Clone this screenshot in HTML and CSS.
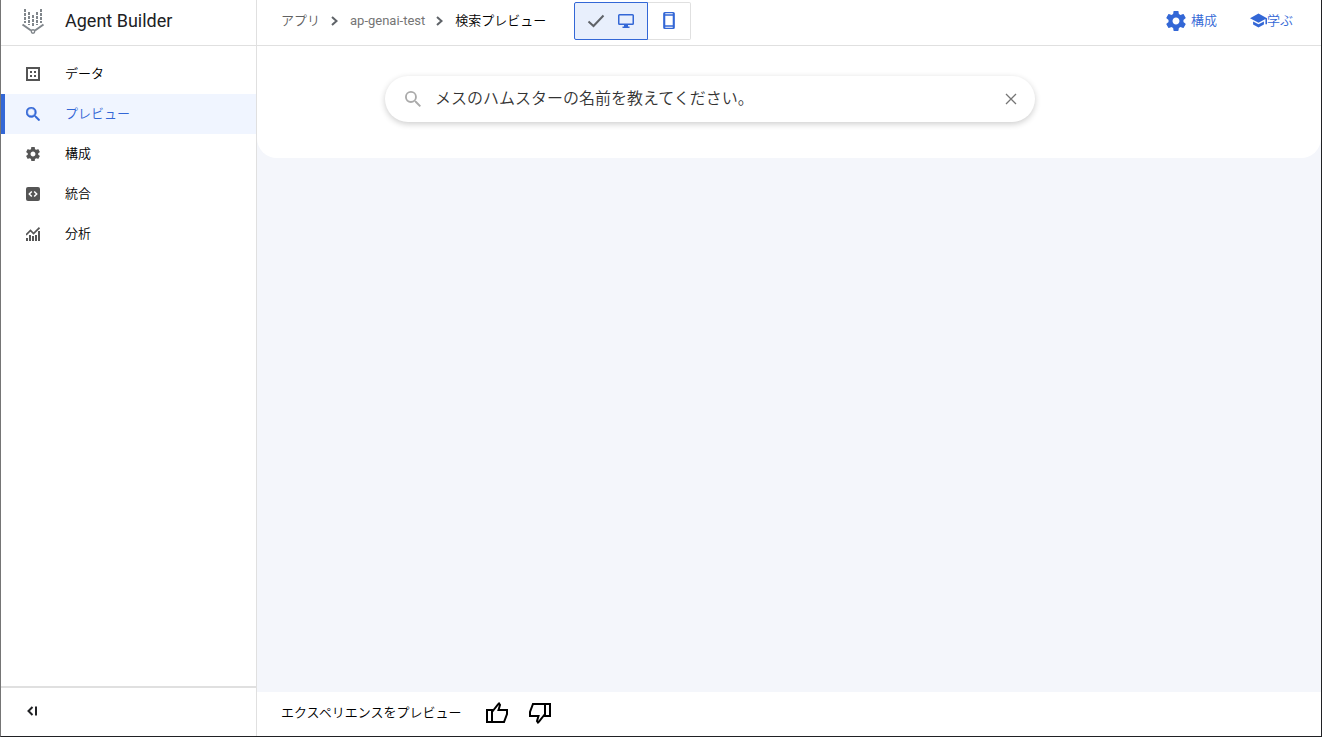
FILE: index.html
```html
<!DOCTYPE html>
<html lang="ja">
<head>
    <meta charset="UTF-8">
    <meta name="viewport" content="width=device-width, initial-scale=1.0">
    <title>Agent Builder</title>
    <link rel="stylesheet" href="styles.css">
</head>
<body>
    <div class="app">
        <aside class="sidebar">
            <div class="brand">
                <svg class="logo" viewBox="0 0 24 28">
                    <path d="M4 2v14M20 2v14" stroke-dasharray="3 1"/>
                    <path d="M8 5v13M16 5v13M12 8v12" stroke-dasharray="3 1"/>
                    <path d="M1.500 17.500L10 23.500M22.500 17.500L14 23.500"/>
                    <circle cx="12" cy="24.500" r="1.700" stroke-width="1.400"/>
                </svg>
                <h1>Agent Builder</h1>
            </div>
            <nav class="menu">
                <a href="#">
                    <svg viewBox="0 0 14 14"><path fill-rule="evenodd" d="M0 0h14v14H0zM2 2v10h10V2zM4 4h2v2H4zM8 4h2v2H8zM4 8h2v2H4zM8 8h2v2H8z"/></svg>
                    データ
                </a>
                <a href="#" class="active" aria-current="page">
                    <svg viewBox="3 3 17.500 17.500"><path d="M15.500 14h-.79l-.28-.27A6.470 6.470 0 0 0 16 9.500 6.500 6.500 0 1 0 9.500 16c1.610 0 3.090-.59 4.230-1.570l.27.28v.79l5 4.990L20.490 19l-4.990-5zm-6 0a4.500 4.500 0 1 1 0-9 4.500 4.500 0 0 1 0 9z" stroke="currentColor" stroke-width=".6"/></svg>
                    プレビュー
                </a>
                <a href="#">
                    <svg viewBox="2 2 20 20"><use href="#gear"/></svg>
                    構成
                </a>
                <a href="#">
                    <svg viewBox="0 0 14 14"><rect width="14" height="14" rx="2"/><path d="M5.800 4.500L3.300 7l2.500 2.500M8.200 4.500L10.700 7 8.200 9.500" fill="none" stroke="#fff" stroke-width="1.500"/></svg>
                    統合
                </a>
                <a href="#">
                    <svg viewBox="0 0 14 14"><path d="M0 11h2v3H0zM3 8h2v6H3zM6 9h2v5H6zM9 8h2v6H9zM12 4h2v10h-2z"/><path d="M0 8l4.500-4.500 3 3L13.500.700" fill="none" stroke="currentColor" stroke-width="1.700"/></svg>
                    分析
                </a>
            </nav>
            <div class="sidebar-footer">
                <button type="button" class="icon-button" aria-label="メニューを閉じる">
                    <svg class="collapse" viewBox="0 0 12 12"><path d="M6.500 2l-4 4 4 4M10 1.500v9"/></svg>
                </button>
            </div>
        </aside>

        <main class="content">
            <header class="topbar">
                <nav class="breadcrumb">
                    <a href="#">アプリ</a>
                    <svg viewBox="0 0 8 12"><path d="M1 2l4.500 4L1 10"/></svg>
                    <a href="#" class="app-name">ap-genai-test</a>
                    <svg viewBox="0 0 8 12"><path d="M1 2l4.500 4L1 10"/></svg>
                    <span class="current">検索プレビュー</span>
                </nav>
                <div class="device-toggle">
                    <button type="button" class="selected" aria-pressed="true" aria-label="デスクトップ">
                        <svg class="check" viewBox="0 0 18 14"><path d="M1.500 7.500l5 4.500L16.500 1.500" fill="none" stroke="#5f6368" stroke-width="2"/></svg>
                        <svg class="desktop" viewBox="0 0 16 14"><path fill-rule="evenodd" d="M1.500 0h13Q16 0 16 1.500v8Q16 11 14.500 11H10v1.500h1.500V14h-7v-1.500H6V11H1.500Q0 11 0 9.500v-8Q0 0 1.500 0zM1.500 1.500v8h13v-8z"/></svg>
                    </button>
                    <button type="button" aria-pressed="false" aria-label="モバイル">
                        <svg class="phone" viewBox="0 0 12 16"><path fill-rule="evenodd" d="M2 0h8Q11.500 0 11.500 1.500v13Q11.500 16 10 16H2Q.5 16 .5 14.500v-13Q.5 0 2 0zM2.500 1.200v1h7v-1zM2.500 3.500v9h7v-9zM2.500 13.800v1h7v-1z"/></svg>
                    </button>
                </div>
                <div class="actions">
                    <a href="#" class="configure">
                        <svg viewBox="2 2 20 20"><path id="gear" d="M19.430 12.980c.04-.32.07-.64.07-.98s-.03-.66-.07-.98l2.110-1.650c.19-.15.24-.42.12-.64l-2-3.460c-.12-.22-.39-.3-.61-.22l-2.490 1c-.52-.4-1.080-.73-1.690-.98l-.38-2.650C14.460 2.180 14.250 2 14 2h-4c-.25 0-.46.18-.49.42l-.38 2.650c-.61.25-1.170.59-1.690.98l-2.490-1c-.23-.09-.49 0-.61.22l-2 3.460c-.13.22-.07.49.12.64l2.110 1.650c-.04.32-.07.65-.07.98s.03.66.07.98l-2.110 1.650c-.19.15-.24.42-.12.64l2 3.460c.12.22.39.3.61.22l2.490-1c.52.4 1.080.73 1.690.98l.38 2.650c.03.24.24.42.49.42h4c.25 0 .46-.18.49-.42l.38-2.650c.61-.25 1.170-.59 1.690-.98l2.490 1c.23.09.49 0 .61-.22l2-3.460c.12-.22.07-.49-.12-.64l-2.110-1.650zM12 15.500c-1.930 0-3.500-1.570-3.500-3.500s1.570-3.500 3.500-3.500 3.500 1.570 3.500 3.500-1.570 3.500-3.500 3.500z"/></svg>
                        構成
                    </a>
                    <a href="#" class="learn">
                        <svg viewBox="1 1 22 22"><path d="M5 13.180v4L12 21l7-3.820v-4L12 17l-7-3.820zM12 3L1 9l11 6 9-4.910V17h2V9L12 3z"/></svg>
                        学ぶ
                    </a>
                </div>
            </header>

            <section class="preview">
                <div class="search-panel">
                    <form class="search-box" role="search">
                        <svg class="search-icon" viewBox="3 3 17.500 17.500"><path d="M15.500 14h-.79l-.28-.27A6.470 6.470 0 0 0 16 9.500 6.500 6.500 0 1 0 9.500 16c1.610 0 3.090-.59 4.230-1.570l.27.28v.79l5 4.990L20.490 19l-4.990-5zm-6 0a4.500 4.500 0 1 1 0-9 4.500 4.500 0 0 1 0 9z"/></svg>
                        <input type="text" aria-label="検索" value="メスのハムスターの名前を教えてください。">
                        <button type="reset" class="icon-button" aria-label="クリア">
                            <svg class="clear" viewBox="0 0 12 12"><path d="M1 1l10 10M11 1L1 11" fill="none" stroke="#757575" stroke-width="1.300"/></svg>
                        </button>
                    </form>
                </div>
            </section>

            <footer class="feedback">
                <span class="feedback-label">エクスペリエンスをプレビュー</span>
                <button type="button" class="icon-button" aria-label="高く評価">
                    <svg class="thumb" viewBox="0 0 22 22"><path d="M1 8h5v12H1zM6 10l6-7.500 1-1 1 1.500-1.500 5H21v4l-3 8H6z"/></svg>
                </button>
                <button type="button" class="icon-button" aria-label="低く評価">
                    <svg class="thumb down" viewBox="0 0 22 22"><path d="M1 8h5v12H1zM6 10l6-7.500 1-1 1 1.500-1.500 5H21v4l-3 8H6z"/></svg>
                </button>
            </footer>
        </main>
    </div>
</body>
</html>
```
FILE: styles.css
```css
* {
    box-sizing: border-box;
}
body {
    margin: 0;
    font-family: Roboto, "Noto Sans CJK JP", sans-serif;
    font-size: 13px;
    font-weight: 350;
    line-height: 20px;
    color: #000;
}
a {
    color: inherit;
    text-decoration: none;
}
button {
    font: inherit;
    cursor: pointer;
}
svg {
    display: block;
    flex: none;
    fill: currentColor;
}
.app {
    display: flex;
    min-height: 100vh;
    border: 1px solid #202124;
    border-top: none;
    border-left-color: #757575;
    background: #fff;
}

/* Sidebar */
.sidebar {
    display: flex;
    flex-direction: column;
    flex: none;
    width: 256px;
    border-right: 1px solid #e0e0e0;
}
.brand {
    display: flex;
    align-items: center;
    gap: 20px;
    height: 46px;
    padding: 0 20px 4px;
    border-bottom: 1px solid #e0e0e0;
}
.logo {
    width: 24px;
    height: 28px;
    fill: none;
    stroke: #80868b;
    stroke-width: 2;
}
.brand h1 {
    margin: 0;
    font-size: 18px;
    font-weight: 400;
    color: #202124;
}
.menu {
    flex: 1;
    padding-top: 8px;
}
.menu a {
    display: flex;
    align-items: center;
    gap: 25px;
    height: 40px;
    padding-left: 21px;
    border-left: 4px solid transparent;
}
.menu svg {
    width: 14px;
    height: 14px;
    color: #555;
}
.menu .active {
    border-left-color: #3367d6;
    background: #f0f5ff;
    color: #3367d6;
}
.menu .active svg {
    color: #3367d6;
}
.icon-button {
    display: block;
    padding: 0;
    border: none;
    background: none;
}
.sidebar-footer {
    display: flex;
    align-items: center;
    height: 50px;
    padding: 0 0 2px 25px;
    border-top: 2px solid #e0e0e0;
}
.collapse {
    width: 12px;
    height: 12px;
    fill: none;
    stroke: #202124;
    stroke-width: 2;
}

/* Main area */
.content {
    display: flex;
    flex-direction: column;
    flex: 1;
}
.topbar {
    display: flex;
    align-items: center;
    height: 46px;
    padding: 0 28px 4px 24px;
    border-bottom: 1px solid #e0e0e0;
}
.breadcrumb {
    display: flex;
    align-items: center;
    gap: 11px;
    color: #616161;
}
.breadcrumb svg {
    width: 8px;
    height: 12px;
    fill: none;
    stroke: #5f6368;
    stroke-width: 2;
}
.breadcrumb .app-name {
    font-weight: 400;
    color: #757575;
}
.breadcrumb .current {
    color: #000;
}
.device-toggle {
    display: flex;
    margin-left: 28px;
    color: #3367d6;
}
.device-toggle button {
    display: flex;
    align-items: center;
    gap: 13px;
    height: 38px;
    padding: 0 14px;
    border: 1px solid #e0e0e0;
    border-left: none;
    border-radius: 0 2px 2px 0;
    background: #fff;
    color: inherit;
}
.device-toggle .selected {
    padding: 0 13px 0 12px;
    border: 1px solid #3367d6;
    border-radius: 2px 0 0 2px;
    background: #e8effc;
}
.check {
    width: 18px;
    height: 14px;
}
.desktop {
    width: 16px;
    height: 14px;
}
.phone {
    width: 14px;
    height: 17px;
}
.actions {
    display: flex;
    gap: 33px;
    margin-left: auto;
    color: #3367d6;
}
.actions a {
    display: flex;
    align-items: center;
}
.configure {
    gap: 5px;
}
.configure svg {
    width: 20px;
    height: 20px;
}
.learn svg {
    width: 17px;
    height: 17px;
}

.preview {
    flex: 1;
    background: #f4f6fb;
}
.search-panel {
    padding: 30px 128px 36px;
    border-radius: 0 0 20px 20px;
    background: #fff;
}
.search-box {
    display: flex;
    align-items: center;
    gap: 14px;
    max-width: 650px;
    height: 46px;
    padding: 0 18px 0 20px;
    border-radius: 23px;
    box-shadow: 0 2px 6px rgba(0, 0, 0, 0.2);
}
.search-box input {
    flex: 1;
    min-width: 0;
    padding: 0;
    border: none;
    outline: none;
    background: none;
    font: 350 16px/24px Roboto, "Noto Sans CJK JP", sans-serif;
    color: #333;
}
.search-icon {
    width: 16px;
    height: 16px;
    color: #aaa;
}
.clear {
    width: 12px;
    height: 12px;
}

.feedback {
    display: flex;
    align-items: center;
    gap: 21px;
    height: 44px;
    padding: 0 24px 2px;
}
.feedback-label {
    margin-right: 4px;
}
.thumb {
    width: 22px;
    height: 22px;
    fill: none;
    stroke: #000;
    stroke-width: 2;
}
.down {
    transform: rotate(180deg);
}
```
